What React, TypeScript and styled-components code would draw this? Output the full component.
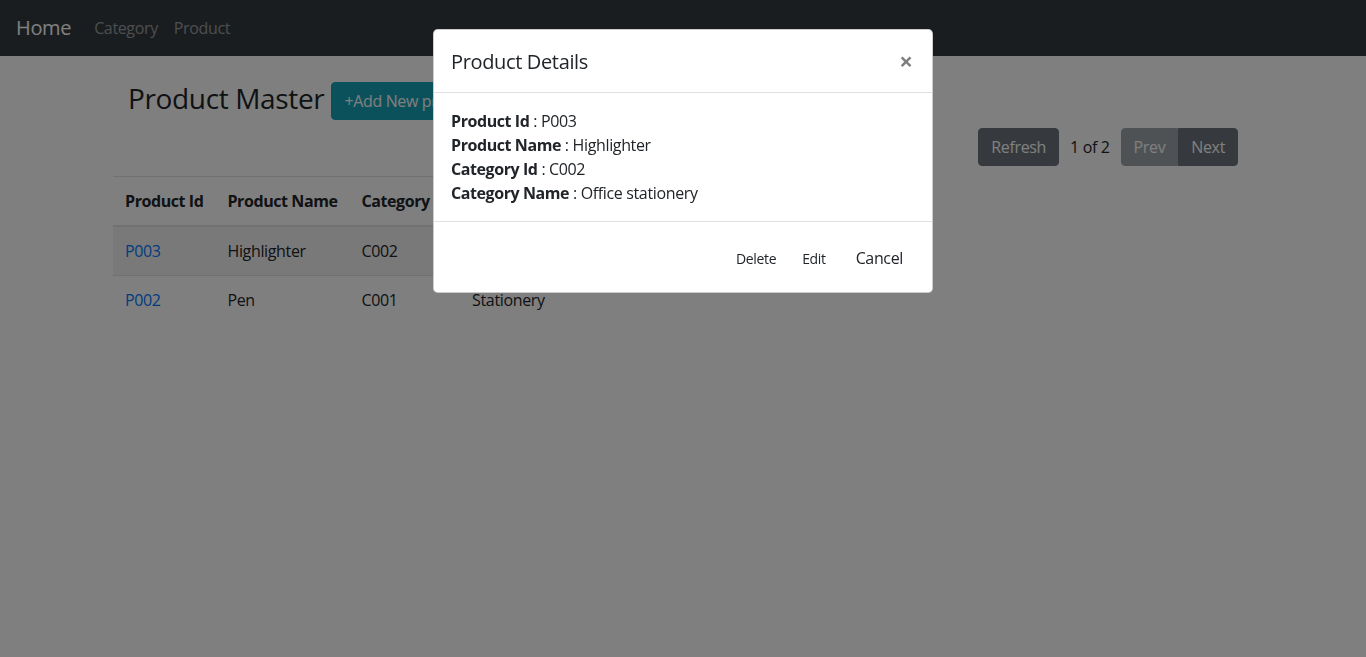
import React from "react";
import styled, { createGlobalStyle, css } from "styled-components";

const GlobalStyle = createGlobalStyle`
	* {
		box-sizing: border-box;
	}

	body {
		margin: 0;
		font-family: "Open Sans", "Liberation Sans", sans-serif;
		font-size: 16px;
		line-height: 1.5;
		letter-spacing: -0.022em;
		color: #212529;
		background: #fff;
	}

	b,
	th {
		letter-spacing: -0.026em;
	}
`;

interface Product {
	id: string;
	name: string;
	categoryId: string;
	categoryName: string;
}

const products: Product[] = [
	{ id: "P003", name: "Highlighter", categoryId: "C002", categoryName: "Office stationery" },
	{ id: "P002", name: "Pen", categoryId: "C001", categoryName: "Stationery" },
];

const selected = products[0];

export default function App() {
	return (
		<>
			<GlobalStyle />
			<Navbar>
				<Brand href="#">Home</Brand>
				<NavLink href="#">Category</NavLink>
				<NavLink href="#">Product</NavLink>
			</Navbar>

			<Container>
				<HeaderRow>
					<PageTitle>Product Master</PageTitle>
					<Button variant="info">+Add New product</Button>
				</HeaderRow>

				<Toolbar>
					<Button variant="secondary">Refresh</Button>
					<PageInfo>1 of 2</PageInfo>
					<ButtonGroup>
						<Button variant="secondary" disabled>
							Prev
						</Button>
						<Button variant="secondary">Next</Button>
					</ButtonGroup>
				</Toolbar>

				<Table>
					<thead>
						<tr>
							<Th>Product Id</Th>
							<Th>Product Name</Th>
							<Th>Category Id</Th>
							<Th>Category Name</Th>
						</tr>
					</thead>
					<tbody>
						{products.map((p, i) => (
							<Row key={p.id} striped={i % 2 === 0}>
								<Td>
									<Link href="#">{p.id}</Link>
								</Td>
								<Td>{p.name}</Td>
								<Td>{p.categoryId}</Td>
								<Td>{p.categoryName}</Td>
							</Row>
						))}
					</tbody>
				</Table>
			</Container>

			<Backdrop />
			<ModalWrap>
				<ModalDialog>
					<ModalContent>
						<ModalHeader>
							<ModalTitle>Product Details</ModalTitle>
							<CloseButton aria-label="Close">×</CloseButton>
						</ModalHeader>
						<ModalBody>
							<Detail>
								<b>Product Id</b> : {selected.id}
							</Detail>
							<Detail>
								<b>Product Name</b> : {selected.name}
							</Detail>
							<Detail>
								<b>Category Id</b> : {selected.categoryId}
							</Detail>
							<Detail>
								<b>Category Name</b> : {selected.categoryName}
							</Detail>
						</ModalBody>
						<ModalFooter>
							<Button small>Delete</Button>
							<Button small>Edit</Button>
							<Button>Cancel</Button>
						</ModalFooter>
					</ModalContent>
				</ModalDialog>
			</ModalWrap>
		</>
	);
}

const Navbar = styled.nav`
	display: flex;
	align-items: center;
	height: 56px;
	padding: 8px 16px;
	background: #343a40;
`;

const Brand = styled.a`
	padding: 5px 0;
	margin-right: 15px;
	font-size: 20px;
	line-height: 30px;
	color: #fff;
	text-decoration: none;
`;

const NavLink = styled.a`
	padding: 8px;
	color: rgba(255, 255, 255, 0.5);
	text-decoration: none;
`;

const Container = styled.div`
	width: 1140px;
	margin: 0 auto;
	padding: 0 15px;
`;

const HeaderRow = styled.div`
	display: flex;
	align-items: center;
	margin-top: 26px;
`;

const PageTitle = styled.h3`
	margin: 0 7px 4px 0;
	font-size: 28px;
	font-weight: 500;
	line-height: 1.2;
`;

const Toolbar = styled.div`
	display: flex;
	justify-content: flex-end;
	align-items: center;
	gap: 11px;
	margin-top: 8px;
`;

const PageInfo = styled.span`
	color: #212529;
`;

const variants = {
	info: css`
		background: #17a2b8;
		border-color: #17a2b8;
		color: #fff;
	`,
	secondary: css`
		background: #6c757d;
		border-color: #6c757d;
		color: #fff;
	`,
	plain: css`
		background: transparent;
		color: #212529;
	`,
};

const Button = styled.button<{ variant?: "info" | "secondary"; small?: boolean }>`
	display: inline-block;
	margin: 0;
	padding: ${(p) => (p.small ? "4px 8px" : "6px 12px")};
	border: 1px solid transparent;
	border-radius: ${(p) => (p.small ? "3.2px" : "4px")};
	font-family: inherit;
	font-size: ${(p) => (p.small ? "14px" : "16px")};
	line-height: 1.5;
	letter-spacing: inherit;
	${(p) => variants[p.variant ?? "plain"]}

	&:disabled {
		opacity: 0.65;
	}
`;

const ButtonGroup = styled.div`
	display: inline-flex;

	${Button}:not(:last-child) {
		border-top-right-radius: 0;
		border-bottom-right-radius: 0;
	}

	${Button}:not(:first-child) {
		border-top-left-radius: 0;
		border-bottom-left-radius: 0;
	}
`;

const Table = styled.table`
	margin: 10px -15px 0;
	border-collapse: collapse;
	color: #212529;
`;

const Th = styled.th`
	padding: 12px;
	text-align: left;
	vertical-align: bottom;
	border-top: 1px solid #dee2e6;
	border-bottom: 2px solid #dee2e6;
`;

const Row = styled.tr<{ striped?: boolean }>`
	background: ${(p) => (p.striped ? "rgba(0, 0, 0, 0.05)" : "transparent")};
`;

const Td = styled.td`
	padding: 12px;
	border-top: 1px solid #dee2e6;
`;

const Link = styled.a`
	color: #007bff;
	text-decoration: none;
`;

const Backdrop = styled.div`
	position: fixed;
	inset: 0;
	background: #000;
	opacity: 0.5;
	z-index: 1040;
`;

const ModalWrap = styled.div`
	position: fixed;
	inset: 0;
	z-index: 1050;
`;

const ModalDialog = styled.div`
	max-width: 500px;
	margin: 29px auto;
`;

const ModalContent = styled.div`
	display: flex;
	flex-direction: column;
	background: #fff;
	border: 1px solid rgba(0, 0, 0, 0.2);
	border-radius: 4.8px;
`;

const ModalHeader = styled.div`
	display: flex;
	align-items: flex-start;
	justify-content: space-between;
	padding: 17px 16px 15px 17px;
	border-bottom: 1px solid #dee2e6;
`;

const ModalTitle = styled.h5`
	margin: 0;
	font-size: 20px;
	font-weight: 400;
	line-height: 1.5;
`;

const CloseButton = styled.button`
	margin: -17px -16px -15px auto;
	padding: 19px 19px 13px 16px;
	border: 0;
	background: transparent;
	font-family: inherit;
	font-size: 24px;
	font-weight: 700;
	line-height: 1;
	color: #000;
	opacity: 0.5;
`;

const ModalBody = styled.div`
	padding: 16px 16px 16px 17px;
`;

const Detail = styled.div`
	b {
		font-weight: 700;
	}
`;

const ModalFooter = styled.div`
	display: flex;
	align-items: center;
	justify-content: flex-end;
	padding: 13px 12px 11px;
	border-top: 1px solid #dee2e6;

	& > * {
		margin: 4px;
	}
`;
